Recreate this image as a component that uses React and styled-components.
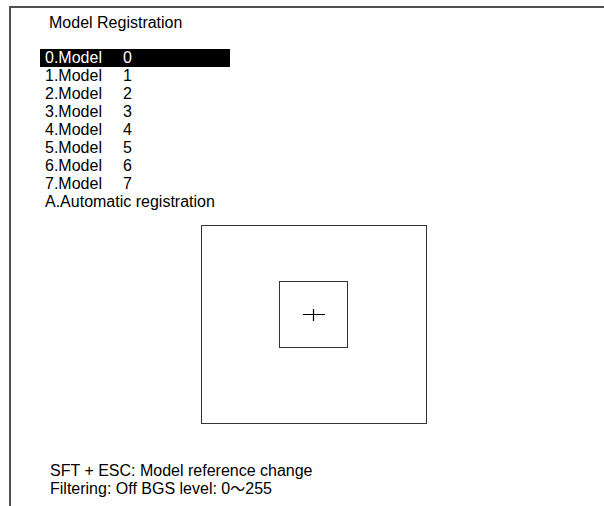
import React from "react";
import styled, { createGlobalStyle } from "styled-components";

const Global = createGlobalStyle`
  html, body { margin: 0; padding: 0; background: #fff; }
  body { font-family: "Liberation Sans", Arial, sans-serif; color: #000; }
`;

const Page = styled.div`
  width: 604px;
  height: 506px;
  overflow: hidden;
  padding: 6px 0 0 9px;
  box-sizing: border-box;
`;

const Frame = styled.div`
  height: 100%;
  border-top: 2px solid #4f4f4f;
  border-left: 2px solid #4f4f4f;
  display: flex;
  flex-direction: column;
  font-size: 16px;
  line-height: 18px;
`;

const Title = styled.div`
  margin: 6px 0 0 38px;
`;

const List = styled.div`
  margin: 17px 0 0 29px;
  width: 190px;
  display: flex;
  flex-direction: column;
`;

const Row = styled.div`
  display: grid;
  grid-template-columns: 78px auto;
  padding-left: 5px;
  white-space: nowrap;
  background: ${(p) => (p.$active ? "#000" : "transparent")};
  color: ${(p) => (p.$active ? "#fff" : "#000")};
`;

const Canvas = styled.div`
  margin: 14px 0 0 190px;
  width: 226px;
  height: 199px;
  box-sizing: border-box;
  border: 1px solid #333;
  display: flex;
  align-items: flex-start;
  justify-content: flex-start;
  padding: 55px 0 0 77px;
`;

const Target = styled.div`
  width: 69px;
  height: 67px;
  box-sizing: border-box;
  border: 1px solid #333;
  display: flex;
  align-items: center;
  justify-content: center;
`;

const Footer = styled.div`
  margin: 38px 0 0 39px;
  line-height: 18px;
`;

const Wave = styled.span`
  font-family: "Noto Sans CJK JP", sans-serif;
  font-size: 15px;
  line-height: 1;
  display: inline-block;
`;

const Cross = () => (
  <svg width="22" height="12" viewBox="0 0 22 12">
    <line x1="0" y1="5.5" x2="22" y2="5.5" stroke="#000" strokeWidth="1" />
    <line x1="10.5" y1="0" x2="10.5" y2="12" stroke="#000" strokeWidth="1.2" />
  </svg>
);

const models = [0, 1, 2, 3, 4, 5, 6, 7];

export default function App() {
  return (
    <>
      <Global />
      <Page>
        <Frame>
          <Title>Model Registration</Title>
          <List>
            {models.map((m) => (
              <Row key={m} $active={m === 0}>
                <span>{m}.Model</span>
                <span>{m}</span>
              </Row>
            ))}
            <Row>
              <span>A.Automatic registration</span>
            </Row>
          </List>
          <Canvas>
            <Target>
              <Cross />
            </Target>
          </Canvas>
          <Footer>
            <div>SFT + ESC: Model reference change</div>
            <div>
              Filtering: Off BGS level: 0<Wave>〜</Wave>255
            </div>
          </Footer>
        </Frame>
      </Page>
    </>
  );
}
